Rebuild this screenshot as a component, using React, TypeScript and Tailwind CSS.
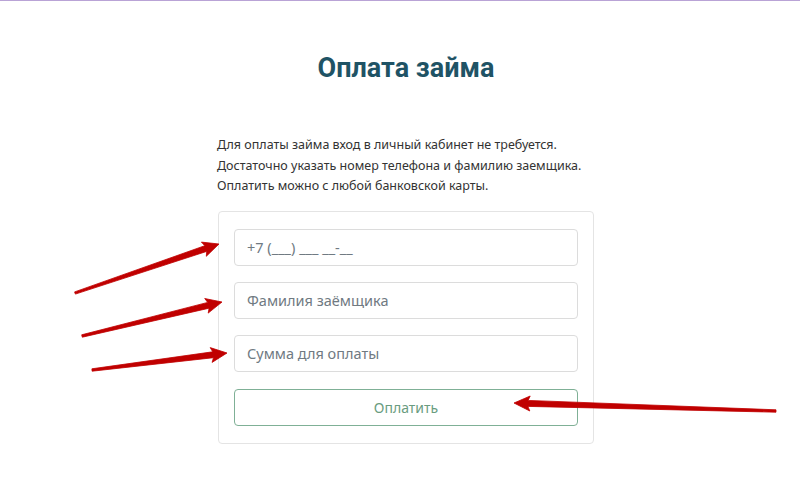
const arrows = [
  { tail: [75, 293], tip: [219, 244] },
  { tail: [82, 336], tip: [222, 302] },
  { tail: [92, 370], tip: [227, 353] },
  { tail: [776, 411], tip: [514, 403] },
];

function arrowPoints(tail: number[], tip: number[]) {
  const [tx, ty] = tail;
  const [px, py] = tip;
  const dx = px - tx;
  const dy = py - ty;
  const len = Math.hypot(dx, dy);
  const ux = dx / len;
  const uy = dy / len;
  const nx = -uy;
  const ny = ux;
  const head = 14;
  const hw = 7.5;
  const w0 = 1.2;
  const w1 = 3;
  const bx = px - ux * head;
  const by = py - uy * head;
  const pts = [
    [tx + nx * w0, ty + ny * w0],
    [bx + nx * w1, by + ny * w1],
    [bx + nx * hw - ux * 2, by + ny * hw - uy * 2],
    [px, py],
    [bx - nx * hw - ux * 2, by - ny * hw - uy * 2],
    [bx - nx * w1, by - ny * w1],
    [tx - nx * w0, ty - ny * w0],
  ];
  return pts.map((p) => p.map((v) => v.toFixed(1)).join(",")).join(" ");
}

export default function App() {
  return (
    <div className="relative h-[491px] w-[800px] overflow-hidden bg-white font-['Noto_Sans',sans-serif]">
      <div className="h-px w-full bg-[#b9a3d6]" />

      <div className="flex justify-center pl-[12px]">
        <div className="flex w-[376px] flex-col">
          <h1 className="mt-[47px] text-center font-['Roboto',sans-serif] text-[27px] font-bold leading-[40px] text-[#1f5365]">
            Оплата займа
          </h1>

          <div className="mt-[47px] -ml-[1px] whitespace-nowrap text-[12.5px] leading-[20.5px] text-[#333333]">
            <p>Для оплаты займа вход в личный кабинет не требуется.</p>
            <p>Достаточно указать номер телефона и фамилию заемщика.</p>
            <p>Оплатить можно с любой банковской карты.</p>
          </div>

          <div className="mt-[14px] flex flex-col gap-4 rounded-[4px] border border-[#e4e4e4] bg-white px-[15px] pt-[17px] pb-[17px]">
            <input
              className="h-[37px] w-full rounded-[4px] border border-[#dcdcdc] px-3 text-[14.5px] text-[#555] outline-none placeholder:text-[#707a82]"
              placeholder="+7 (___) ___ __-__"
            />
            <input
              className="h-[37px] w-full rounded-[4px] border border-[#dcdcdc] px-3 text-[14.5px] text-[#555] outline-none placeholder:text-[#707a82]"
              placeholder="Фамилия заёмщика"
            />
            <input
              className="h-[37px] w-full rounded-[4px] border border-[#dcdcdc] px-3 text-[14.5px] text-[#555] outline-none placeholder:text-[#707a82]"
              placeholder="Сумма для оплаты"
            />
            <button className="mt-px h-[37px] w-full rounded-[4px] border border-[#7fb096] text-[14px] text-[#6a9c80]">
              Оплатить
            </button>
          </div>
        </div>
      </div>

      <svg className="pointer-events-none absolute left-0 top-0" width="800" height="491">
        {arrows.map((a, i) => (
          <polygon key={i} points={arrowPoints(a.tail, a.tip)} fill="#c00000" strokeLinejoin="round" stroke="#c00000" strokeWidth="0.8" />
        ))}
      </svg>
    </div>
  );
}
